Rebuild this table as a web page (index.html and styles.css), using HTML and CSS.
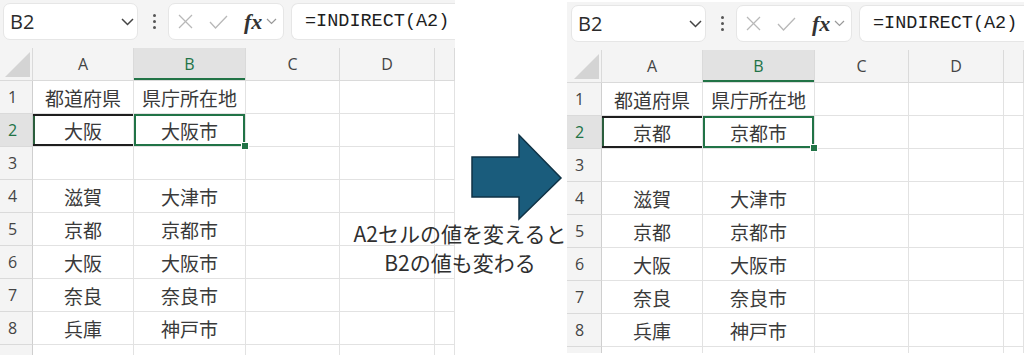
FILE: index.html
```html
<!DOCTYPE html>
<html lang="ja">
<head>
  <meta charset="UTF-8" />
  <title>INDIRECT</title>
  <link rel="stylesheet" href="styles.css">
</head>
<body>
  <main class="compare">
    <section class="sheet" data-row2="大阪,大阪市">
      <div class="toolbar">
        <div class="namebox">
          <span>B2</span>
          <svg class="chev" width="13" height="8" viewBox="0 0 13 8"><polyline points="1,1 6.5,6.5 12,1" /></svg>
        </div>
        <div class="dots"><i></i><i></i><i></i></div>
        <div class="fxbox">
          <svg class="cancel" width="15" height="15" viewBox="0 0 15 15"><line x1="1" y1="1" x2="14" y2="14" /><line x1="14" y1="1" x2="1" y2="14" /></svg>
          <svg class="enter" width="19" height="14" viewBox="0 0 19 14"><polyline points="1,7 6.5,13 18,1" /></svg>
          <span class="fx">fx</span>
          <svg class="chev small" width="11" height="7" viewBox="0 0 11 7"><polyline points="1,1 5.5,5.5 10,1" /></svg>
        </div>
        <div class="formula">=INDIRECT(A2)</div>
      </div>
      <div class="grid"></div>
    </section>

    <section class="sheet sheet-after" data-row2="京都,京都市">
      <div class="toolbar">
        <div class="namebox">
          <span>B2</span>
          <svg class="chev" width="13" height="8" viewBox="0 0 13 8"><polyline points="1,1 6.5,6.5 12,1" /></svg>
        </div>
        <div class="dots"><i></i><i></i><i></i></div>
        <div class="fxbox">
          <svg class="cancel" width="15" height="15" viewBox="0 0 15 15"><line x1="1" y1="1" x2="14" y2="14" /><line x1="14" y1="1" x2="1" y2="14" /></svg>
          <svg class="enter" width="19" height="14" viewBox="0 0 19 14"><polyline points="1,7 6.5,13 18,1" /></svg>
          <span class="fx">fx</span>
          <svg class="chev small" width="11" height="7" viewBox="0 0 11 7"><polyline points="1,1 5.5,5.5 10,1" /></svg>
        </div>
        <div class="formula">=INDIRECT(A2)</div>
      </div>
      <div class="grid"></div>
    </section>

    <!-- arrow and caption sit over the gap between the two sheets -->
    <div class="note">
      <svg class="arrow" width="96" height="90" viewBox="0 0 96 90">
        <polygon points="2,24 49,24 49,2 91,45 49,86 49,64 2,64" />
      </svg>
      <p class="caption">A2セルの値を変えると<br>B2の値も変わる</p>
    </div>
  </main>

  <script>
    const columns = ["", "A", "B", "C", "D", ""];
    const rows = [
      ["都道府県", "県庁所在地"],
      null, // row 2 comes from the sheet's data-row2
      ["", ""],
      ["滋賀", "大津市"],
      ["京都", "京都市"],
      ["大阪", "大阪市"],
      ["奈良", "奈良市"],
      ["兵庫", "神戸市"],
      ["", ""]
    ];

    function cell(cls, text) {
      const el = document.createElement("div");
      el.className = "cell " + cls;
      if (text) el.textContent = text;
      return el;
    }

    document.querySelectorAll(".sheet").forEach(sheet => {
      const grid = sheet.querySelector(".grid");
      const row2 = sheet.dataset.row2.split(",");

      columns.forEach((name, i) => {
        if (i === 0) {
          const corner = cell("hd corner");
          corner.appendChild(document.createElement("span"));
          grid.appendChild(corner);
        } else {
          grid.appendChild(cell("hd col" + (name === "B" ? " active" : ""), name));
        }
      });

      rows.forEach((values, r) => {
        const n = r + 1;
        const vals = n === 2 ? row2 : values;
        // last row is only a sliver at the bottom edge, so no number
        const label = n < rows.length ? String(n) : "";
        grid.appendChild(cell("hd row" + (n === 2 ? " active" : ""), label));
        grid.appendChild(cell("val" + (n === 2 ? " sel-a" : ""), vals[0]));
        grid.appendChild(cell("val" + (n === 2 ? " sel-b" : ""), vals[1]));
        grid.appendChild(cell("val"));
        grid.appendChild(cell("val"));
        grid.appendChild(cell("val"));
      });
    });
  </script>
</body>
</html>
```

FILE: styles.css
```css
body {
  margin: 0;
  background: #fff;
  color: #333;
  font-family: "Open Sans", "Noto Sans CJK JP", sans-serif;
  overflow: hidden;
}

.compare {
  position: relative;
  display: flex;
  gap: 112px;
  width: 1024px;
  height: 355px;
}

/* one excel window */
.sheet {
  --row-head: 33px;
  width: 455px;
  height: 355px;
  background: #f4f4f4;
  overflow: hidden;
}

.sheet-after {
  --row-head: 35px;
  width: 457px;
  height: 351px;
  margin-top: 2px;
}

.toolbar {
  display: flex;
  align-items: center;
  height: 37px;
  padding: 3px 0 8px 3px;
}

.sheet-after .toolbar {
  padding-left: 4px;
}

.namebox,
.fxbox,
.formula {
  display: flex;
  align-items: center;
  height: 37px;
  box-sizing: border-box;
  background: #fff;
  border: 1px solid #e6e6e6;
  border-radius: 7px;
}

.namebox {
  justify-content: space-between;
  width: 135px;
  padding: 0 3px 0 6px;
  font-size: 20px;
  color: #2b2b2b;
}

.chev polyline,
.cancel line,
.enter polyline {
  fill: none;
  stroke-width: 1.5;
}

.chev polyline {
  stroke: #444;
}

.chev.small polyline {
  stroke: #999;
  stroke-width: 1.2;
}

.dots {
  display: flex;
  flex-direction: column;
  gap: 3px;
  margin: 0 12px 0 15px;
}

.dots i {
  width: 3px;
  height: 3px;
  border-radius: 50%;
  background: #555;
}

.fxbox {
  width: 116px;
  padding: 0 4px 0 9px;
}

.cancel line,
.enter polyline {
  stroke: #b8b8b8;
  stroke-width: 1.3;
}

.enter {
  margin-left: 16px;
}

.fx {
  margin-left: 16px;
  margin-right: 4px;
  font-family: "Liberation Serif", serif;
  font-style: italic;
  font-weight: bold;
  font-size: 22px;
  color: #333;
  line-height: 1;
}

.formula {
  flex: 1;
  margin-left: 7px;
  padding-left: 13px;
  border-right: none;
  border-radius: 7px 0 0 7px;
  font-family: "Liberation Mono", monospace;
  font-size: 18.5px;
  color: #1e1e1e;
}

/* cell grid */
.grid {
  display: grid;
  grid-template-columns: var(--row-head) 101px 112px 94px 95px 1fr;
  grid-auto-rows: 33px;
  background: #fff;
}

.cell {
  position: relative;
  display: flex;
  align-items: center;
  justify-content: center;
  box-sizing: border-box;
  border-right: 1px solid #e2e2e2;
  border-bottom: 1px solid #e2e2e2;
}

.hd {
  background: #f4f4f4;
  border-color: #dadada;
  font-size: 16px;
  color: #444;
}

.hd.row {
  justify-content: flex-start;
  padding-left: 8px;
  border-right-color: #cfcfcf;
}

.hd.active {
  background: #e2e2e2;
  color: #217346;
}

.hd.col.active {
  box-shadow: inset 0 -2px #217346;
}

.corner {
  align-items: flex-end;
  justify-content: flex-end;
  padding: 0 2px 3px 0;
}

.corner span {
  width: 25px;
  height: 25px;
  background: #d4d4d4;
  clip-path: polygon(100% 0, 100% 100%, 0 100%);
}

.val {
  font-family: "Noto Sans CJK JP", sans-serif;
  font-size: 19px;
  color: #3a3a3a;
}

.sel-a {
  box-shadow: inset 0 2px #1e1e1e, inset 0 -2px #1e1e1e, inset 2px 0 #2b5e3d;
}

.sel-b {
  box-shadow: inset 0 0 0 2px #217346;
}

.sel-b::after {
  content: "";
  position: absolute;
  right: -4px;
  bottom: -4px;
  width: 6px;
  height: 6px;
  background: #217346;
  border: 1px solid #fff;
  z-index: 1;
}

/* annotation */
.note {
  position: absolute;
  left: 340px;
  top: 133px;
  width: 240px;
}

.arrow {
  display: block;
  margin-left: 130px;
}

.arrow polygon {
  fill: #1a5c7c;
  stroke: #0f3245;
  stroke-width: 1.5;
  stroke-linejoin: miter;
}

.caption {
  margin: -4px 0 0;
  font-family: "Noto Sans CJK JP", sans-serif;
  font-size: 21px;
  line-height: 29px;
  text-align: center;
  color: #2f2f2f;
}
```
